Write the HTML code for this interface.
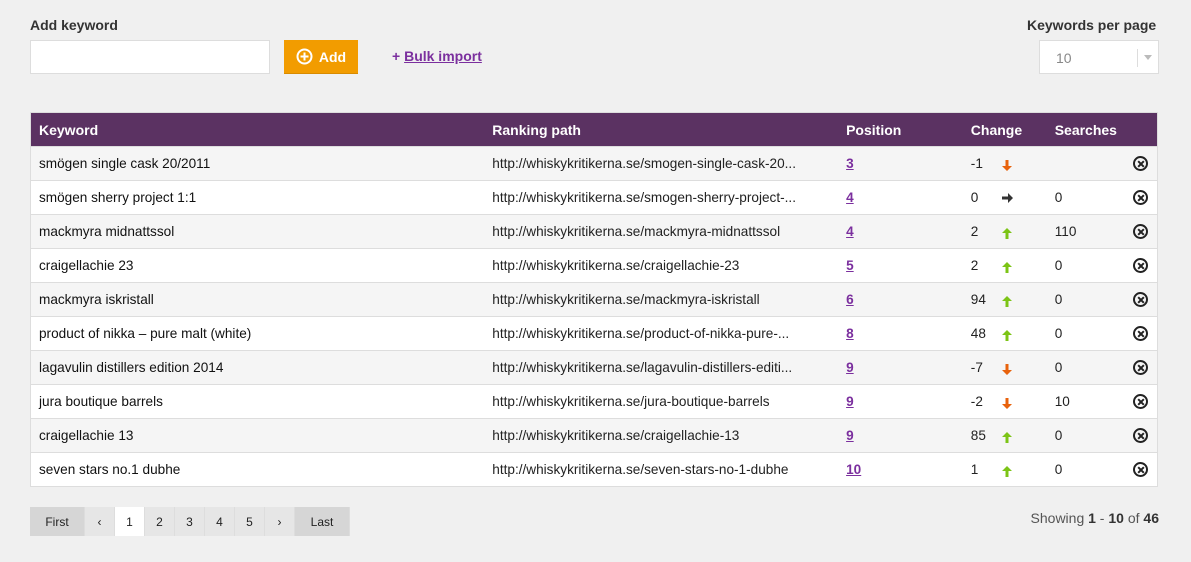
<!DOCTYPE html>
<html><head><meta charset="utf-8"><style>
*{box-sizing:border-box;margin:0;padding:0}
body{width:1191px;height:562px;background:#f0f0f0;font-family:"Liberation Sans",sans-serif;font-size:14px;color:#222;position:relative;overflow:hidden}
.lbl{position:absolute;font-weight:bold;font-size:14px;color:#333}
.inp{position:absolute;left:30px;top:40px;width:240px;height:34px;background:#fff;border:1px solid #ddd}
.add{position:absolute;left:284px;top:40px;width:74px;height:34px;background:#f29c00;border-bottom:1px solid #d88b00;color:#fff;font-weight:bold;display:flex;align-items:center;justify-content:center;gap:6px}
.bulk{position:absolute;left:392px;top:48px;color:#7b2f9e;font-weight:bold}
.bulk u{color:#7b2f9e}
.sel{position:absolute;left:1039px;top:40px;width:120px;height:34px;background:#fff;border:1px solid #ddd;color:#888;padding:9px 0 0 16px}
.sel .sep{position:absolute;left:97px;top:8px;width:1px;height:18px;background:#ddd}
.sel .car{position:absolute;right:6px;top:14px;border:4px solid transparent;border-top:5px solid #bbb;border-bottom:0}
table{position:absolute;left:30px;top:112px;width:1128px;border-collapse:collapse;border:1px solid #ddd}
th{background:#5b3262;color:#fff;text-align:left;height:34px;font-weight:bold;padding:0 8px}
td{height:34px;border-top:1px solid #ddd;padding:0 8px;white-space:nowrap;font-size:13.6px}
tr:nth-child(odd) td{background:#f5f5f5}
tr:nth-child(even) td{background:#fff}
td a{color:#7b2f9e;font-weight:bold;text-decoration:underline}
.kw{color:#111}
.ch{display:flex;align-items:center}
.ch span{display:inline-block;width:30px}
.ch svg{display:block}
.x{display:inline-block;width:15px;height:15px;border:2px solid #222;border-radius:50%;position:relative;vertical-align:middle}
.x:before,.x:after{content:"";position:absolute;left:4.5px;top:1.5px;width:2px;height:8px;background:#222;transform:rotate(45deg)}
.x:after{transform:rotate(-45deg)}
.pg{position:absolute;left:30px;top:507px;height:29px;display:flex;font-size:12px}
.pg span{display:flex;align-items:center;justify-content:center;height:29px;background:#e6e6e6;border-right:1px solid #ddd;color:#222}
.show{position:absolute;right:32px;top:510px;color:#555;font-size:14px}
</style></head><body>
<div class="lbl" style="left:30px;top:17px">Add keyword</div>
<div class="inp"></div>
<div class="add"><svg width="17" height="17" viewBox="0 0 17 17"><circle cx="8.5" cy="8.5" r="7" fill="none" stroke="#fff" stroke-width="2"/><path d="M8.5 4.5v8M4.5 8.5h8" stroke="#fff" stroke-width="2"/></svg>Add</div>
<div class="bulk">+ <u>Bulk import</u></div>
<div class="lbl" style="left:1027px;top:17px">Keywords per page</div>
<div class="sel">10<div class="sep"></div><div class="car"></div></div>
<table>
<colgroup><col style="width:455px"><col style="width:354px"><col style="width:125px"><col style="width:84px"><col style="width:70px"><col></colgroup>
<tr><th>Keyword</th><th>Ranking path</th><th>Position</th><th>Change</th><th>Searches</th><th></th></tr>
<tbody id="b"></tbody>
</table>
<div class="pg">
<span style="width:55px;background:#d6d6d6">First</span><span style="width:30px">‹</span><span style="width:30px;background:#fff">1</span><span style="width:30px">2</span><span style="width:30px">3</span><span style="width:30px">4</span><span style="width:30px">5</span><span style="width:30px">›</span><span style="width:55px;background:#d6d6d6">Last</span>
</div>
<div class="show">Showing <b style="color:#333">1</b> - <b style="color:#333">10</b> of <b style="color:#333">46</b></div>
<script>
var d=[["smögen single cask 20/2011","http://whiskykritikerna.se/smogen-single-cask-20...","3","-1","d",""],
["smögen sherry project 1:1","http://whiskykritikerna.se/smogen-sherry-project-...","4","0","r","0"],
["mackmyra midnattssol","http://whiskykritikerna.se/mackmyra-midnattssol","4","2","u","110"],
["craigellachie 23","http://whiskykritikerna.se/craigellachie-23","5","2","u","0"],
["mackmyra iskristall","http://whiskykritikerna.se/mackmyra-iskristall","6","94","u","0"],
["product of nikka – pure malt (white)","http://whiskykritikerna.se/product-of-nikka-pure-...","8","48","u","0"],
["lagavulin distillers edition 2014","http://whiskykritikerna.se/lagavulin-distillers-editi...","9","-7","d","0"],
["jura boutique barrels","http://whiskykritikerna.se/jura-boutique-barrels","9","-2","d","10"],
["craigellachie 13","http://whiskykritikerna.se/craigellachie-13","9","85","u","0"],
["seven stars no.1 dubhe","http://whiskykritikerna.se/seven-stars-no-1-dubhe","10","1","u","0"]];
var ar={d:'<svg width="12" height="13" viewBox="0 0 12 13" style="margin-top:4px"><path d="M4.5 1h3v6h3.5L6 12 1 7h3.5z" fill="#e8620c"/></svg>',
u:'<svg width="12" height="13" viewBox="0 0 12 13" style="margin-top:4px"><path d="M4.5 12h3V6h3.5L6 1 1 6h3.5z" fill="#7cc416"/></svg>',
r:'<svg width="13" height="12" viewBox="0 0 13 12"><path d="M1 4.5v3h6v3.5L12 6 7 1v3.5z" fill="#333"/></svg>'};
var h="";d.forEach(function(r){h+='<tr><td class="kw">'+r[0]+'</td><td>'+r[1]+'</td><td><a>'+r[2]+'</a></td><td><div class="ch"><span>'+r[3]+'</span>'+ar[r[4]]+'</div></td><td>'+r[5]+'</td><td style="text-align:right;padding-right:9px"><span class="x"></span></td></tr>'});
document.getElementById("b").innerHTML=h;
</script>
</body></html>
